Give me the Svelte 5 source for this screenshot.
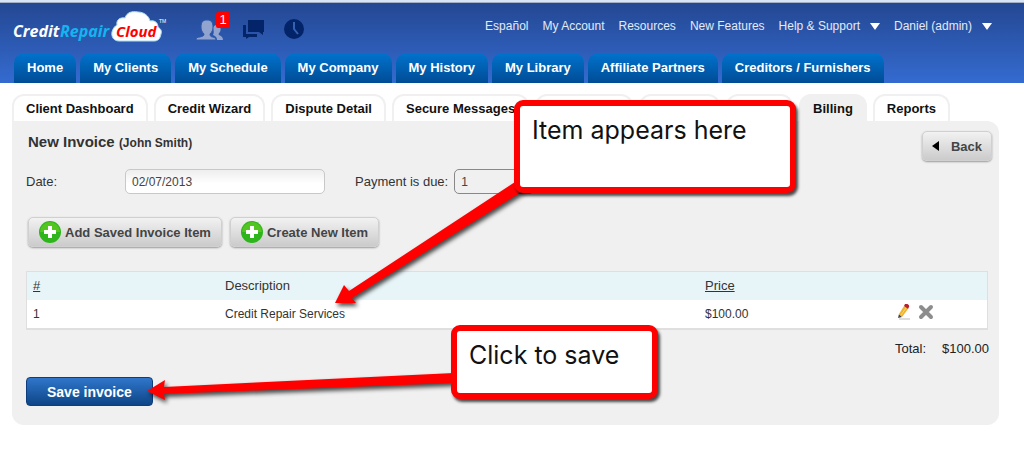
<script lang="ts">
	let date = '02/07/2013';
	let dueDays = '1';

	const topLinks = ['Español', 'My Account', 'Resources', 'New Features'];
	const menus = ['Help & Support', 'Daniel (admin)'];

	const mainNav = [
		'Home',
		'My Clients',
		'My Schedule',
		'My Company',
		'My History',
		'My Library',
		'Affiliate Partners',
		'Creditors / Furnishers'
	];

	// tabs without a label stay blank behind the first callout
	const clientTabs: { label: string; size?: string; active?: boolean }[] = [
		{ label: 'Client Dashboard' },
		{ label: 'Credit Wizard' },
		{ label: 'Dispute Detail' },
		{ label: 'Secure Messages' },
		{ label: '', size: 'large' },
		{ label: '', size: 'medium' },
		{ label: '', size: 'small' },
		{ label: 'Billing', active: true },
		{ label: 'Reports' }
	];

	const items = [{ id: 1, description: 'Credit Repair Services', price: 100 }];
	$: total = items.reduce((sum, item) => sum + item.price, 0);

	function money(n: number) {
		return '$' + n.toFixed(2);
	}
</script>

<div class="page">
	<header>
		<div class="top">
			<a class="logo" href="#home" aria-label="CreditRepairCloud">
				<svg width="156" height="34" viewBox="0 0 156 34">
					<path
						d="M106 31c-5 0-8-4-7-9 1-4 3-6 5-7-1-5 3-8 8-7 2-6 7-7 13-6 6 0 11 4 12 9 5-1 8 2 8 6 3 2 4 4 3 7-1 5-3 7-7 7z"
						fill="#fff"
						stroke="#a9dcf3"
					/>
					<text x="0" y="27" class="word white">Credit</text>
					<text x="47" y="27" class="word cyan">Repair</text>
					<text x="103" y="27" class="word red">Cloud</text>
					<text x="146" y="13" class="tm">TM</text>
				</svg>
			</a>
			<div class="status">
				<a class="people" href="#leads" aria-label="Leads">
					<svg width="28" height="22" viewBox="0 0 28 22" fill="#91a4cf">
						<path
							d="M17 9c1-3 4-4 6-2 2 1 2 4 1 6-1 1-2 2-1 3 2 1 4 2 4 5h-6c0-3-2-4-4-5 1-2 1-4 0-7z"
						/>
						<path
							d="M5 8c0-5 2-7 6-7s6 2 6 7c0 3-1 5-3 7 0 2 1 3 3 3 2 1 3 1 3 3H0c0-2 1-3 4-3 3-1 4-1 4-3-2-2-3-4-3-7z"
							stroke="#2c58a9"
						/>
					</svg>
					<span class="badge">1</span>
				</a>
				<a href="#messages" aria-label="Messages">
					<svg width="22" height="20" viewBox="0 0 22 20" fill="#04246a">
						<path d="M5 1h16v12h-1v3l-4-3H5z" />
						<path d="M0 6h3v9h11v3H6l-3 2v-2H0z" />
					</svg>
				</a>
				<a href="#clock" aria-label="Time">
					<svg width="20" height="20" viewBox="0 0 20 20">
						<circle cx="10" cy="10" r="10" fill="#04246a" />
						<path d="M10 3v7l4 5" fill="none" stroke="#3561b5" stroke-width="2" />
					</svg>
				</a>
			</div>
			<div class="links">
				{#each topLinks as link}
					<a href="#top">{link}</a>
				{/each}
				{#each menus as menu}
					<button type="button" class="menu">
						{menu}
						<svg width="10" height="7" viewBox="0 0 10 7" aria-hidden="true">
							<path d="M0 0h10L5 7z" fill="#fff" />
						</svg>
					</button>
				{/each}
			</div>
		</div>
		<nav class="main-nav">
			{#each mainNav as item}
				<a href="#nav">{item}</a>
			{/each}
		</nav>
	</header>

	<main>
		<nav class="tabs">
			{#each clientTabs as tab}
				<a href="#tab" class={tab.size} class:active={tab.active}>{tab.label}</a>
			{/each}
		</nav>

		<section class="panel">
			<div class="title">
				<h1>New Invoice <small>(John Smith)</small></h1>
				<button type="button" class="btn back">
					<svg width="7" height="10" viewBox="0 0 7 10" aria-hidden="true">
						<path d="M7 0v10L0 5z" fill="#000" />
					</svg>
					Back
				</button>
			</div>

			<div class="fields">
				<label class="date-label" for="date">Date:</label>
				<input id="date" type="text" bind:value={date} />
				<label class="due-label" for="due">Payment is due:</label>
				<select id="due" bind:value={dueDays}>
					<option value="1">1</option>
				</select>
			</div>

			<div class="actions">
				{#each ['Add Saved Invoice Item', 'Create New Item'] as action}
					<button type="button" class="btn">
						<svg width="22" height="22" viewBox="0 0 22 22" aria-hidden="true">
							<circle cx="11" cy="11" r="11" fill="#2fb51c" />
							<path d="M1 11a10 10 0 0 1 20 0z" fill="#52c51f" />
							<path d="M9 5h4v4h4v4h-4v4H9v-4H5V9h4z" fill="#fff" />
						</svg>
						{action}
					</button>
				{/each}
			</div>

			<table>
				<thead>
					<tr>
						<th class="num"><a href="#sort">#</a></th>
						<th class="desc">Description</th>
						<th class="price"><a href="#sort">Price</a></th>
						<th class="tools"></th>
					</tr>
				</thead>
				<tbody>
					{#each items as item (item.id)}
						<tr>
							<td>{item.id}</td>
							<td>{item.description}</td>
							<td>{money(item.price)}</td>
							<td>
								<div class="tool-row">
									<button type="button" aria-label="Edit item">
										<svg width="14" height="16" viewBox="0 0 14 16">
											<path d="M2 15h11" stroke="#ddd" stroke-width="2" />
											<path d="M1 14l1-4 3 3z" fill="#444" />
											<path d="M2 10L7 2l4 3-6 8z" fill="#f0b32c" />
											<path d="M4 11L9 4" stroke="#f9d578" />
											<path d="M7 2l1-2c2-1 5 1 4 3l-1 2z" fill="#b8202c" />
										</svg>
									</button>
									<button type="button" aria-label="Delete item">
										<svg width="16" height="16" viewBox="0 0 16 16">
											<path
												d="M3 3l10 10M13 3L3 13"
												stroke="#8d8d8d"
												stroke-width="4"
												stroke-linecap="round"
											/>
										</svg>
									</button>
								</div>
							</td>
						</tr>
					{/each}
				</tbody>
			</table>

			<div class="total">
				<span>Total:</span>
				<span>{money(total)}</span>
			</div>

			<button type="button" class="save">Save invoice</button>
		</section>
	</main>

	<!-- callouts and their arrows float over the page -->
	<svg class="arrows" width="1024" height="449" viewBox="0 0 1024 449" aria-hidden="true">
		<path d="M335 303l9-18 5 6L515 182l8 9L352 298l4 5z" />
		<path d="M147 391l18-11-1 7 290-14v10l-290 11 1 6z" />
	</svg>
	<div class="callout item-callout">Item appears here</div>
	<div class="callout save-callout">Click to save</div>
</div>

<style>
	:global(body) {
		margin: 0;
		background: #fff;
	}

	.page {
		position: relative;
		font-family: 'Liberation Sans', Arial, sans-serif;
		font-size: 12px;
		line-height: 16px;
		color: #333;
		overflow: hidden;
		padding-bottom: 24px;
	}

	a {
		color: inherit;
		text-decoration: none;
	}

	button {
		font-family: inherit;
		cursor: pointer;
	}

	svg {
		display: block;
	}

	header {
		border-top: 2px solid #d7e5f7;
		box-shadow: inset 0 1px #a4b0c5;
		background: linear-gradient(#244792, #346bd0);
		color: #e3eaf8;
	}

	.top {
		display: flex;
		align-items: flex-start;
		height: 51px;
		padding: 0 32px 0 13px;
		box-sizing: border-box;
	}

	.logo {
		padding-top: 8px;
	}

	.word {
		font-family: 'Open Sans', 'Noto Sans', sans-serif;
		font-size: 16px;
		font-weight: 700;
		font-style: italic;
	}

	.white {
		fill: #fff;
	}

	.cyan {
		fill: #14b4f0;
	}

	.red {
		fill: #f00;
		font-size: 15px;
	}

	.tm {
		font-size: 5px;
		fill: #fff;
	}

	.status {
		display: flex;
		gap: 19px;
		padding: 17px 0 0 27px;
	}

	.people {
		position: relative;
	}

	.badge {
		position: absolute;
		left: 20px;
		top: -7px;
		width: 14px;
		height: 16px;
		border-radius: 2px;
		background: #f00;
		color: #fff;
		font-size: 13px;
		text-align: center;
	}

	.links {
		display: flex;
		gap: 14px;
		margin-left: auto;
		padding-top: 16px;
	}

	.menu {
		display: flex;
		align-items: center;
		gap: 10px;
		padding: 0;
		border: 0;
		background: none;
		color: inherit;
		font-size: 12px;
		line-height: 16px;
	}

	.main-nav {
		display: flex;
		gap: 4px;
		padding-left: 14px;
	}

	.main-nav a {
		padding: 0 13px;
		border-radius: 10px 10px 0 0;
		background: linear-gradient(#0073cd, #004c95);
		color: #fff;
		font-size: 13px;
		font-weight: bold;
		line-height: 30px;
	}

	main {
		padding: 11px 25px 0 12px;
	}

	.tabs {
		display: flex;
		gap: 6px;
	}

	.tabs a {
		height: 27px;
		padding: 0 12px;
		box-sizing: border-box;
		border: 2px solid #f0f0f0;
		border-bottom: 0;
		border-radius: 12px 12px 0 0;
		color: #111;
		font-size: 13px;
		font-weight: bold;
		line-height: 26px;
	}

	.tabs .active {
		background: #f0f0f0;
	}

	.tabs .large {
		width: 98px;
	}

	.tabs .medium {
		width: 81px;
	}

	.tabs .small {
		width: 67px;
	}

	.panel {
		padding: 10px 10px 19px 14px;
		border-radius: 0 12px 12px 12px;
		background: #f0f0f0;
	}

	.title {
		display: flex;
		align-items: flex-start;
		justify-content: space-between;
		padding-left: 2px;
		margin-right: -3px;
	}

	h1 {
		margin: 3px 0 0;
		font-size: 15px;
		line-height: 16px;
	}

	small {
		font-size: 12px;
	}

	.btn {
		display: flex;
		align-items: center;
		gap: 4px;
		height: 30px;
		padding: 0 10px;
		border: 1px solid #d0d0d0;
		border-radius: 5px;
		background: linear-gradient(#f2f2f2, #cbcbcb);
		box-shadow: 0 1px 2px #999;
		color: #444;
		font-size: 13px;
		font-weight: bold;
	}

	.back {
		gap: 12px;
		padding: 0 9px;
	}

	.fields {
		display: flex;
		align-items: center;
		margin-top: 8px;
		font-size: 13px;
	}

	.date-label {
		width: 99px;
	}

	.due-label {
		margin: 0 6px 0 30px;
	}

	input,
	select {
		height: 25px;
		box-sizing: border-box;
		border: 1px solid #c8c8c8;
		border-radius: 5px;
		color: #444;
		font-family: inherit;
		font-size: 12px;
	}

	input {
		width: 200px;
		padding: 0 6px;
		background: linear-gradient(#eee, #fff 60%);
	}

	select {
		width: 80px;
		padding: 0 2px;
		border-color: #888;
		background: #f0f0f0;
	}

	.actions {
		display: flex;
		gap: 8px;
		margin: 23px 0 24px 2px;
	}

	table {
		width: calc(100% - 1px);
		border: 1px solid #dfdfdf;
		border-bottom-width: 2px;
		border-collapse: separate;
		border-spacing: 0;
		table-layout: fixed;
		background: #fff;
	}

	th,
	td {
		height: 28px;
		padding: 0 0 0 6px;
		box-sizing: border-box;
		text-align: left;
	}

	th {
		background: #e8f5f8;
		font-size: 13px;
		font-weight: normal;
	}

	th a {
		text-decoration: underline;
	}

	.num {
		width: 20%;
	}

	.desc {
		width: 50%;
	}

	.price {
		width: 20%;
	}

	.tool-row {
		display: flex;
		gap: 7px;
		padding-bottom: 4px;
	}

	.tool-row button {
		padding: 0;
		border: 0;
		background: none;
	}

	.total {
		display: flex;
		justify-content: flex-end;
		gap: 16px;
		margin: 11px 0 20px;
		color: #222;
		font-size: 13px;
	}

	.save {
		height: 29px;
		padding: 0 20px;
		border: 1px solid #0d3d7a;
		border-radius: 4px;
		background: linear-gradient(#2f76cb, #0e4586);
		color: #fff;
		font-size: 14px;
		font-weight: bold;
	}

	.arrows {
		position: absolute;
		left: 0;
		top: 0;
		fill: #f00;
		filter: drop-shadow(2px 3px 2px rgba(0, 0, 0, 0.7));
		pointer-events: none;
	}

	.callout {
		position: absolute;
		box-sizing: border-box;
		padding: 8px 12px;
		border: 6px solid #f00;
		border-radius: 9px;
		background: #fff;
		box-shadow: 2px 3px 3px rgba(0, 0, 0, 0.7);
		color: #111;
		font-family: Inter, 'Open Sans', sans-serif;
		font-size: 25px;
		line-height: 32px;
	}

	.item-callout {
		left: 514px;
		top: 100px;
		width: 282px;
		height: 93px;
	}

	.save-callout {
		left: 451px;
		top: 325px;
		width: 207px;
		height: 74px;
	}
</style>
